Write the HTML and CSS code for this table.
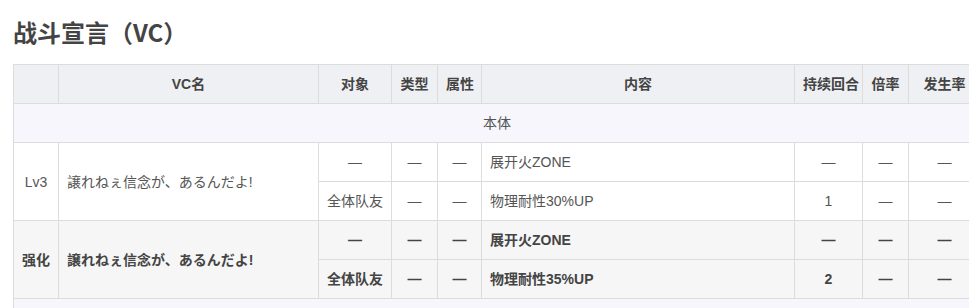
FILE: index.html
```html
<!DOCTYPE html>
<html lang="zh-CN">
<head>
<meta charset="utf-8">
<link rel="stylesheet" href="styles.css">
</head>
<body>
<div class="page">
  <h2 class="title">战斗宣言（VC）</h2>
  <table class="vc-table">
    <colgroup>
      <col class="c-lv"><col class="c-name"><col class="c-target"><col class="c-type"><col class="c-attr"><col class="c-content"><col class="c-turn"><col class="c-rate"><col class="c-prob">
    </colgroup>
    <thead>
      <tr>
        <th></th><th>VC名</th><th>对象</th><th>类型</th><th>属性</th><th>内容</th><th>持续回合</th><th>倍率</th><th>发生率</th>
      </tr>
    </thead>
    <tbody>
      <tr class="section"><td colspan="9">本体</td></tr>
      <tr>
        <td rowspan="2">Lv3</td>
        <td rowspan="2" class="left">譲れねぇ信念が、あるんだよ!</td>
        <td>—</td><td>—</td><td>—</td><td class="left">展开火ZONE</td><td>—</td><td>—</td><td>—</td>
      </tr>
      <tr>
        <td>全体队友</td><td>—</td><td>—</td><td class="left">物理耐性30%UP</td><td>1</td><td>—</td><td>—</td>
      </tr>
      <tr class="strong">
        <td rowspan="2">强化</td>
        <td rowspan="2" class="left">譲れねぇ信念が、あるんだよ!</td>
        <td>—</td><td>—</td><td>—</td><td class="left">展开火ZONE</td><td>—</td><td>—</td><td>—</td>
      </tr>
      <tr class="strong">
        <td>全体队友</td><td>—</td><td>—</td><td class="left">物理耐性35%UP</td><td>2</td><td>—</td><td>—</td>
      </tr>
      <tr class="section"><td colspan="9"></td></tr>
    </tbody>
  </table>
</div>
</body>
</html>
```
FILE: styles.css
```css
html, body {
  margin: 0;
  padding: 0;
  overflow: hidden;
  background: #fff;
}
body {
  font-family: "Liberation Sans", "Noto Sans CJK SC", sans-serif;
  color: #555;
}
.page {
  padding: 15px 0 0 13px;
}
.title {
  margin: 0 0 15px 0;
  font-size: 24px;
  line-height: 34px;
  font-weight: bold;
  color: #444;
  font-family: "Noto Sans CJK SC", "Liberation Sans", sans-serif;
}
.vc-table {
  border-collapse: collapse;
  table-layout: fixed;
  width: 967px;
  font-size: 14px;
}
.c-lv { width: 45px; }
.c-name { width: 260px; }
.c-target { width: 73px; }
.c-type { width: 46px; }
.c-attr { width: 44px; }
.c-content { width: 313px; }
.c-turn { width: 68px; }
.c-rate { width: 46px; }
.c-prob { width: 72px; }
.vc-table th,
.vc-table td {
  border: 1px solid #dcdcdc;
  height: 39px;
  padding: 0 8px;
  box-sizing: border-box;
  text-align: center;
  vertical-align: middle;
  line-height: 20px;
  white-space: nowrap;
}
.vc-table th {
  background: #eef0f3;
  color: #444;
  font-weight: bold;
}
.vc-table td.left {
  text-align: left;
}
.vc-table tr.section td {
  background: #f6f6fc;
}
.vc-table tr.strong td {
  background: #f6f6f6;
  font-weight: bold;
  color: #444;
}
```
